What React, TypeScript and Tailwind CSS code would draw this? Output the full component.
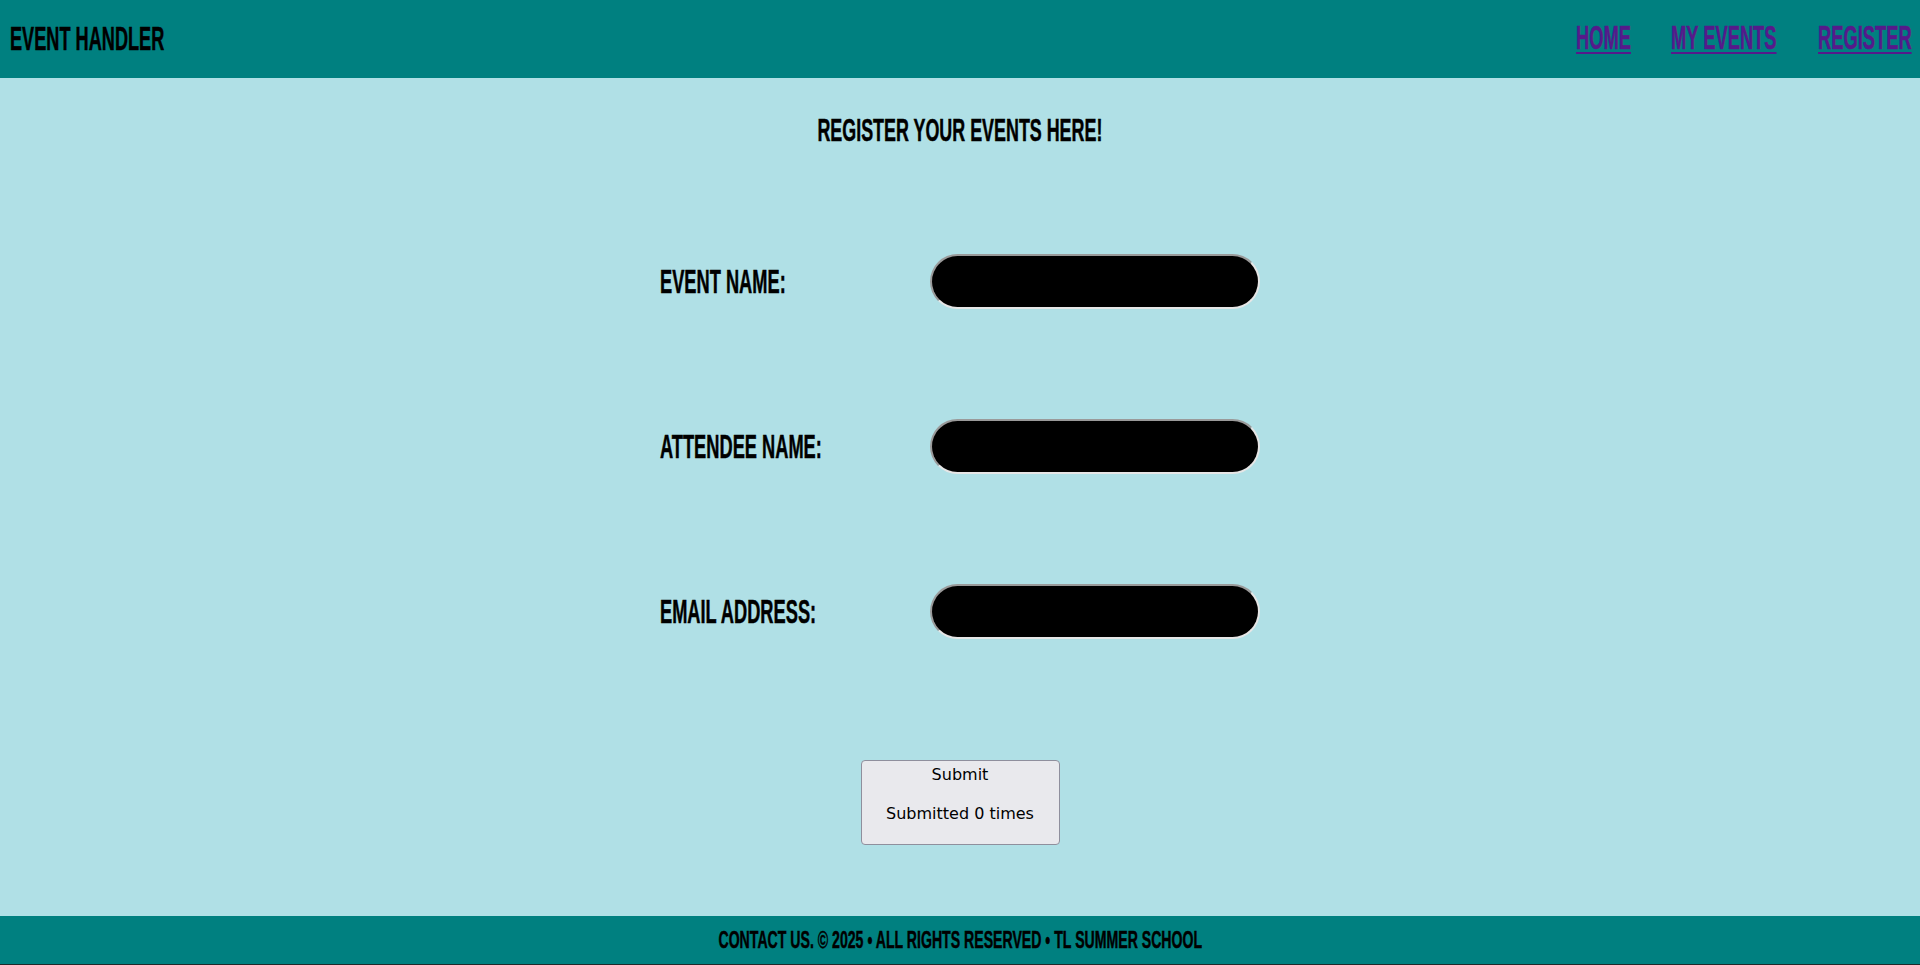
import React, { useState } from "react";

// Bebas-like look: Liberation Sans Bold squeezed horizontally
const display =
  "font-['Liberation_Sans',Arial,sans-serif] font-bold leading-none whitespace-nowrap [-webkit-text-stroke:0.5px_currentColor]";

function Field({ label }: { label: string }) {
  return (
    <div className="flex items-center">
      <label className={`${display} w-[270px] shrink-0 text-[33px] text-black`}>
        <span className="inline-block origin-left scale-x-[0.553]">{label}</span>
      </label>
      <input
        type="text"
        className="w-[330px] h-[55px] rounded-full bg-black border-2 border-t-[#9a9a9a] border-l-[#9a9a9a] border-b-[#e6e6e6] border-r-[#e6e6e6] outline-none px-5 text-white"
      />
    </div>
  );
}

function NavLink({ label, width }: { label: string; width: string }) {
  return (
    <li className={width}>
      <a
        href="#"
        className={`${display} inline-block origin-left scale-x-[0.555] text-[33px] text-[#551a8b] underline decoration-2 underline-offset-[3px]`}
      >
        {label}
      </a>
    </li>
  );
}

export default function App() {
  const [count, setCount] = useState(0);

  return (
    <div className="min-h-screen flex flex-col bg-[#b0e0e6]">
      <header className="h-[78px] bg-[#008080] flex items-center justify-between pl-[10px] pr-[11px] pb-[2px]">
        <h1 className={`${display} text-[33px] text-black`}>
          <span className="inline-block origin-left scale-x-[0.55]">EVENT HANDLER</span>
        </h1>
        <ul className="flex gap-[40px]">
          <NavLink label="HOME" width="w-[55px]" />
          <NavLink label="MY EVENTS" width="w-[107px]" />
          <NavLink label="REGISTER" width="w-[91px]" />
        </ul>
      </header>

      <main className="flex-1 flex flex-col items-center">
        <h2 className={`${display} text-[31px] text-black mt-[37px]`}>
          <span className="inline-block scale-x-[0.577]">REGISTER YOUR EVENTS HERE!</span>
        </h2>

        <form
          className="flex flex-col items-center mt-[108px]"
          onSubmit={(e) => {
            e.preventDefault();
            setCount(count + 1);
          }}
        >
          <div className="flex flex-col gap-[110px]">
            <Field label="EVENT NAME:" />
            <Field label="ATTENDEE NAME:" />
            <Field label="EMAIL ADDRESS:" />
          </div>

          <button
            type="submit"
            className="mt-[121px] w-[199px] h-[85px] flex flex-col items-center bg-[#e9e9ed] border border-[#8f8f9d] rounded-[4px] font-['DejaVu_Sans',sans-serif] text-[16px] text-black pt-[4px]"
          >
            <span className="leading-[20px]">Submit</span>
            <span className="leading-[20px] mt-[19px]">Submitted {count} times</span>
          </button>
        </form>
      </main>

      <footer className="h-[49px] bg-[#008080] border-b border-[#1f2a2a] flex items-center justify-center">
        <p className={`${display} text-[24px] text-black`}>
          <span className="inline-block scale-x-[0.588]">
            CONTACT US. © 2025 • ALL RIGHTS RESERVED • TL SUMMER SCHOOL
          </span>
        </p>
      </footer>
    </div>
  );
}
